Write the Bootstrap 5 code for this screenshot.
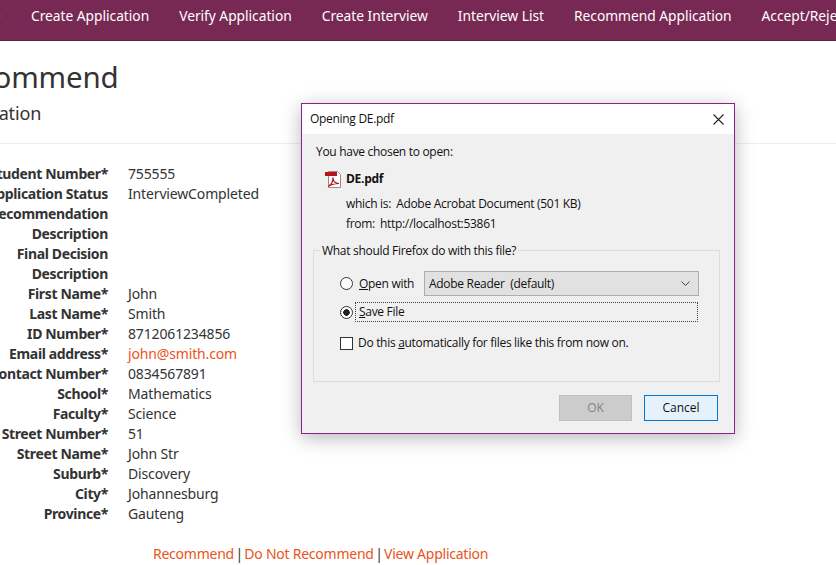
<!DOCTYPE html>
<html lang="en">
<head>
  <meta charset="UTF-8">
  <meta name="viewport" content="width=device-width, initial-scale=1.0">
  <title>Recommend Application</title>
  <link href="https://cdn.jsdelivr.net/npm/bootstrap@5.3.3/dist/css/bootstrap.min.css" rel="stylesheet">
  <style>
    html, body { height: 100%; }
    body { font-family: "Noto Sans", "Open Sans", sans-serif; font-size: 14px; letter-spacing: -.15px; color: #333; background: #fff; overflow: hidden; position: relative; }
    a { color: #e95420; text-decoration: none; }

    .topbar { height: 41px; background: #772953; border-bottom: 1px solid #5c2041; flex-wrap: nowrap; overflow: hidden; padding: 0; }
    .topbar a { color: #fff; white-space: nowrap; font-size: 13.8px; letter-spacing: -.03px; line-height: 32px; margin-left: 30px; display: block; }
    .topbar a:first-of-type { margin-left: 31px; }
    .topbar .menu-caret { position: absolute; left: -3px; top: 13px; border-left: 4px solid #e95420; border-top: 3px solid transparent; border-bottom: 3px solid transparent; }

    .page-head { height: 103px; border-bottom: 1px solid #eee; padding-top: 17px; }
    .page-head h2 { font-size: 29.500px; line-height: 38px; margin: 0 0 0 -55px; font-weight: 400; white-space: nowrap; color: #333; letter-spacing: -.2px; }
    .page-head h4 { font-size: 18px; line-height: 24px; margin: 5px 0 0 -52px; font-weight: 400; white-space: nowrap; color: #333; }

    .detail-list { margin: 20px 0 0; line-height: 20px; }
    .detail-list .detail-row { display: flex; height: 20px; white-space: nowrap; }
    .detail-list dt { width: 108px; flex: none; display: flex; justify-content: flex-end; font-weight: 700; letter-spacing: -.36px; }
    .detail-list dd { margin: 0 0 0 20px; }
    .detail-links { margin: 20px 0 0 153px; line-height: 20px; letter-spacing: -.24px; }
    .link-sep { margin: 0 -2px; }

    .file-dialog { position: absolute; left: 301px; top: 103px; width: 434px; height: 331px; background: #f0f0f0; border: 1px solid #8e1f8e; box-shadow: 0 4px 18px rgba(0,0,0,.28); font-family: "Open Sans", "Noto Sans", sans-serif; font-size: 12px; letter-spacing: -.3px; color: #111; }
    .dialog-title { height: 30px; background: #fff; padding-left: 8px; line-height: 28px; }
    .dialog-close { width: 11px; height: 11px; margin-right: 10px; }
    .dialog-body { padding: 9px 14px 0 11px; }
    .file-line { padding-left: 3px; line-height: 18px; }
    .file-name { margin: 9px 0 0 12px; gap: 4px; height: 18px; font-weight: 700; }
    .file-meta { margin: 6px 0 0 33px; line-height: 20px; }
    .file-meta > div { height: 20px; gap: 5px; }
    .file-box { position: relative; height: 132px; margin-top: 16px; border: 1px solid #dcdcdc; padding: 20px 0 0 26px; }
    .file-box .box-legend { position: absolute; top: -8px; left: 6px; padding: 0 2px; background: #f0f0f0; line-height: 16px; }
    .win-radio { width: 13px; height: 13px; border: 1px solid #333; border-radius: 50%; background: #fff; flex: none; }
    .win-radio.is-on { background: radial-gradient(circle, #222 0 3px, #fff 3.5px); }
    .win-check { width: 13px; height: 13px; border: 1px solid #333; background: #fff; flex: none; }
    .reader-select { width: 275px; height: 25px; margin-left: 11px; background: #e1e1e1; border: 1px solid #adadad; padding: 0 8px 0 4px; }
    .open-row { height: 25px; }
    .open-row label { margin-left: 6px; width: 54px; white-space: nowrap; }
    .save-row { height: 20px; margin-top: 6px; }
    .save-focus { width: 343px; height: 20px; margin-left: 2px; border: 1px dotted #444; padding-left: 3px; line-height: 17px; }
    .auto-row { margin-top: 13px; gap: 5px; line-height: 16px; }
    .dialog-actions { gap: 12px; margin-top: 13px; padding-right: 2px; }
    .win-btn { width: 73px; height: 26px; padding: 0; border-radius: 0; font-size: 12px; line-height: 24px; color: #111; }
    .win-btn.btn-ok { background: #ccc; border: 1px solid #bfbfbf; color: #838383; opacity: 1; }
    .win-btn.btn-cancel { width: 74px; background: #e5f1fb; border: 1px solid #0078d7; }
  </style>
</head>
<body>
  <nav class="navbar topbar d-flex justify-content-start align-items-start">
    <span class="menu-caret"></span>
    <a href="#">Create Application</a>
    <a href="#">Verify Application</a>
    <a href="#">Create Interview</a>
    <a href="#">Interview List</a>
    <a href="#">Recommend Application</a>
    <a href="#">Accept/Reject Application</a>
  </nav>

  <div class="page-head">
    <h2>Recommend</h2>
    <h4>Application</h4>
  </div>

  <dl class="detail-list" id="details"></dl>
  <div class="detail-links">
    <a href="#">Recommend</a> <span class="link-sep">|</span> <a href="#">Do Not Recommend</a> <span class="link-sep">|</span> <a href="#">View Application</a>
  </div>

  <div class="file-dialog">
    <div class="dialog-title d-flex justify-content-between align-items-center">
      <span>Opening DE.pdf</span>
      <svg class="dialog-close" viewBox="0 0 11 11" fill="none" stroke="#222" stroke-width="1.1"><path d="M.5.5l10 10M10.5.5l-10 10"/></svg>
    </div>
    <div class="dialog-body">
      <div class="file-line">You have chosen to open:</div>
      <div class="file-name d-flex align-items-center">
        <svg width="17" height="17" viewBox="0 0 17 17">
          <path d="M3.500.5h9l3 3v13h-12z" fill="#fff" stroke="#9b8a8a"/>
          <path d="M0 1h12v4H0z" fill="#b3141d"/>
          <path d="M3 15.500c3-1.500 5-5 5-9 0 4 2 6 6 6-4 0-8 1-11 3z" fill="none" stroke="#b3141d" stroke-width="1.200"/>
        </svg>
        <span>DE.pdf</span>
      </div>
      <div class="file-meta">
        <div class="d-flex"><span>which is:</span><span>Adobe Acrobat Document (501 KB)</span></div>
        <div class="d-flex"><span>from:</span><span>http://localhost:53861</span></div>
      </div>
      <div class="file-box">
        <span class="box-legend">What should Firefox do with this file?</span>
        <div class="open-row d-flex align-items-center">
          <span class="win-radio"></span>
          <label><u>O</u>pen with</label>
          <div class="reader-select d-flex justify-content-between align-items-center">
            <span>Adobe Reader&nbsp; (default)</span>
            <svg width="9" height="5" viewBox="0 0 9 5" fill="none" stroke="#444"><path d="M.5.5l4 4 4-4"/></svg>
          </div>
        </div>
        <div class="save-row d-flex align-items-center">
          <span class="win-radio is-on"></span>
          <div class="save-focus"><u>S</u>ave File</div>
        </div>
        <div class="auto-row d-flex align-items-center">
          <span class="win-check"></span>
          <span>Do this <u>a</u>utomatically for files like this from now on.</span>
        </div>
      </div>
      <div class="dialog-actions d-flex justify-content-end">
        <button class="btn win-btn btn-ok" disabled>OK</button>
        <button class="btn win-btn btn-cancel">Cancel</button>
      </div>
    </div>
  </div>

  <script>
    const rows = [
      ['Student Number*', '755555'],
      ['Application Status', 'InterviewCompleted'],
      ['Recommendation', ''],
      ['Description', ''],
      ['Final Decision', ''],
      ['Description', ''],
      ['First Name*', 'John'],
      ['Last Name*', 'Smith'],
      ['ID Number*', '8712061234856'],
      ['Email address*', '<a href="#">john@smith.com</a>'],
      ['Contact Number*', '0834567891'],
      ['School*', 'Mathematics'],
      ['Faculty*', 'Science'],
      ['Street Number*', '51'],
      ['Street Name*', 'John Str'],
      ['Suburb*', 'Discovery'],
      ['City*', 'Johannesburg'],
      ['Province*', 'Gauteng']
    ];
    document.getElementById('details').innerHTML = rows.map(r =>
      `<div class="detail-row"><dt>${r[0]}</dt><dd>${r[1]}</dd></div>`).join('');
  </script>
  <script src="https://cdn.jsdelivr.net/npm/bootstrap@5.3.3/dist/js/bootstrap.bundle.min.js"></script>
</body>
</html>
